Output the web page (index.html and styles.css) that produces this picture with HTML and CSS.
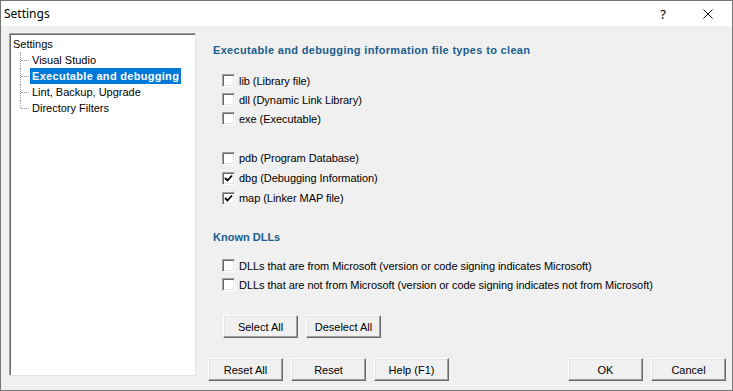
FILE: index.html
```html
<!DOCTYPE html>
<html>
<head>
<meta charset="utf-8">
<link rel="stylesheet" href="styles.css">
</head>
<body>
<div class="window">
  <div class="titlebar">
    <span class="title">Settings</span>
    <span class="tb-btn help">?</span>
    <span class="tb-btn close">
      <svg width="10" height="10" viewBox="0 0 10 10"><path d="M0.5 0.5 L9.5 9.5 M9.5 0.5 L0.5 9.5" stroke="#111" stroke-width="1" fill="none"/></svg>
    </span>
  </div>
  <div class="main">
    <div class="tree">
      <div class="tree-root">Settings</div>
      <ul class="tree-children">
        <li><span class="node">Visual Studio</span></li>
        <li><span class="node selected">Executable and debugging</span></li>
        <li><span class="node">Lint, Backup, Upgrade</span></li>
        <li class="last"><span class="node">Directory Filters</span></li>
      </ul>
    </div>
    <div class="right">
      <div class="content">
        <div class="heading long">Executable and debugging information file types to clean</div>
        <div class="group g1">
          <label class="row r19"><span class="cb"></span><span>lib (Library file)</span></label>
          <label class="row r19"><span class="cb"></span><span>dll (Dynamic Link Library)</span></label>
          <label class="row r19"><span class="cb"></span><span>exe (Executable)</span></label>
        </div>
        <div class="group g2">
          <label class="row r20"><span class="cb"></span><span>pdb (Program Database)</span></label>
          <label class="row r20"><span class="cb checked"><svg width="9" height="9" viewBox="0 0 9 9"><path d="M1 4 L3.5 6.5 L8 1.5" stroke="#000" stroke-width="1.8" fill="none"/></svg></span><span>dbg (Debugging Information)</span></label>
          <label class="row r20"><span class="cb checked"><svg width="9" height="9" viewBox="0 0 9 9"><path d="M1 4 L3.5 6.5 L8 1.5" stroke="#000" stroke-width="1.8" fill="none"/></svg></span><span>map (Linker MAP file)</span></label>
        </div>
        <div class="heading h2">Known DLLs</div>
        <div class="group g3">
          <label class="row r19"><span class="cb"></span><span>DLLs that are from Microsoft (version or code signing indicates Microsoft)</span></label>
          <label class="row r19"><span class="cb"></span><span>DLLs that are not from Microsoft (version or code signing indicates not from Microsoft)</span></label>
        </div>
        <div class="sel-buttons">
          <button class="btn">Select All</button>
          <button class="btn">Deselect All</button>
        </div>
      </div>
      <div class="bottom">
        <button class="btn">Reset All</button>
        <button class="btn">Reset</button>
        <button class="btn">Help (F1)</button>
        <span class="spacer"></span>
        <button class="btn">OK</button>
        <button class="btn">Cancel</button>
      </div>
    </div>
  </div>
</div>
</body>
</html>
```
FILE: styles.css
```css
* { box-sizing: border-box; }
html, body { margin: 0; padding: 0; background: #f0f0f0; }
body {
  font-family: "Liberation Sans", Arial, sans-serif;
  font-size: 11px;
  color: #000;
}
.window {
  width: 733px;
  height: 391px;
  border: 1px solid #777;
  background: #f0f0f0;
  display: flex;
  flex-direction: column;
}
.titlebar {
  height: 25px;
  background: #fff;
  display: flex;
  align-items: center;
  padding-right: 1px;
}
.title {
  font-family: "Noto Sans", sans-serif;
  font-size: 12px;
  padding-left: 3px;
  flex: 1;
  color: #000;
}
.tb-btn {
  height: 25px;
  display: flex;
  align-items: center;
  justify-content: center;
}
.help {
  width: 44px;
  font-family: "Noto Sans", sans-serif;
  font-size: 13px;
}
.close { width: 46px; }

.main {
  flex: 1;
  display: flex;
  align-items: flex-start;
}
.tree {
  margin: 7px 0 0 8px;
  width: 187px;
  height: 343px;
  background: #fff;
  border-top: 1px solid #a0a0a0;
  border-left: 1px solid #a0a0a0;
  border-right: 1px solid #fff;
  border-bottom: 1px solid #fff;
  box-shadow: inset 1px 1px 0 #696969;
  padding: 2px 2px;
  position: relative;
}
.tree::after {
  content: "";
  position: absolute;
  inset: -1px;
  border-right: 1px solid #e3e3e3;
  border-bottom: 1px solid #e3e3e3;
  pointer-events: none;
}
.tree-root {
  height: 16px;
  line-height: 16px;
  padding-left: 1px;
}
.tree-children {
  list-style: none;
  margin: 0;
  padding: 0 0 0 18px;
}
.tree-children li {
  position: relative;
  height: 16px;
  line-height: 16px;
}
.tree-children li::before {
  content: "";
  position: absolute;
  left: -10px;
  top: 0;
  height: 16px;
  border-left: 1px dotted #a0a0a0;
}
.tree-children li.last::before { height: 8px; }
.tree-children li::after {
  content: "";
  position: absolute;
  left: -9px;
  top: 8px;
  width: 8px;
  border-top: 1px dotted #a0a0a0;
}
.node {
  display: inline-block;
  padding: 0 2px;
  height: 16px;
}
.node.selected {
  background: #0078d7;
  color: #fff;
  font-weight: bold;
  letter-spacing: 0.3px;
}

.right {
  flex: 1;
  height: 364px;
  display: flex;
  flex-direction: column;
}
.content {
  flex: 1;
  padding: 16px 0 0 17px;
}
.heading {
  height: 16px;
  line-height: 16px;
  font-weight: bold;
  color: #1a5e8e;
}
.heading.long { letter-spacing: 0.33px; }
.group { padding-left: 9px; letter-spacing: -0.05px; }
.g1 { margin-top: 13px; }
.g2 { margin-top: 20px; }
.h2 { margin-top: 21px; }
.g3 { margin-top: 11px; }
.row {
  display: flex;
  align-items: center;
  gap: 4px;
}
.r19 { height: 19px; }
.r20 { height: 20px; }
.cb {
  width: 13px;
  height: 13px;
  background: #fff;
  border-top: 1px solid #a0a0a0;
  border-left: 1px solid #a0a0a0;
  border-right: 1px solid #fff;
  border-bottom: 1px solid #fff;
  box-shadow: inset 1px 1px 0 #696969, inset -1px -1px 0 #e3e3e3;
  display: flex;
  align-items: center;
  justify-content: center;
  flex: none;
}
.cb svg { display: block; }

.sel-buttons {
  margin-top: 21px;
  padding-left: 10px;
  display: flex;
  gap: 8px;
}
.btn {
  width: 75px;
  height: 23px;
  padding: 0;
  font-family: "Liberation Sans", Arial, sans-serif;
  font-size: 11px;
  color: #000;
  background: #f0f0f0;
  border-top: 1px solid #fff;
  border-left: 1px solid #fff;
  border-right: 1px solid #696969;
  border-bottom: 1px solid #696969;
  box-shadow: inset -1px -1px 0 #a0a0a0, inset 1px 1px 0 #e3e3e3;
  border-radius: 0;
}
.bottom {
  display: flex;
  gap: 8px;
  padding: 0 6px 9px 12px;
}
.spacer { flex: 1; }
```
